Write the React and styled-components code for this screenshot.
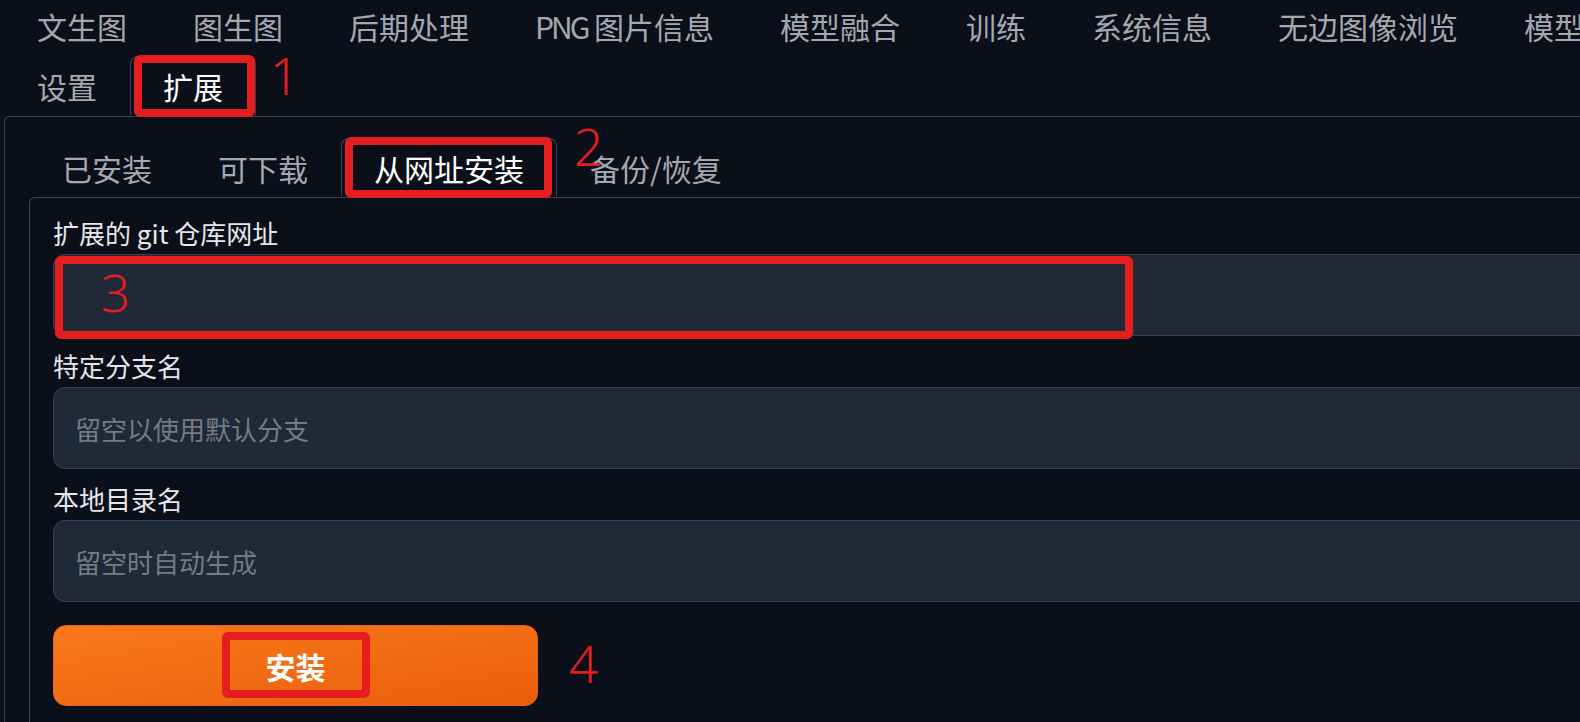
import React from 'react';
import styled, { createGlobalStyle } from 'styled-components';

const bg = '#0b0f19';
const line = '#374151';
const red = '#e41e1f';

const Global = createGlobalStyle`
  html, body {
    margin: 0;
    background: ${bg};
    overflow: hidden;
  }
  body {
    font-family: "Noto Sans CJK SC", "Noto Sans", sans-serif;
  }
`;

const Page = styled.div`
  width: 1700px;
  padding-left: 4px;
  box-sizing: border-box;
`;

const TabBar = styled.div`
  display: flex;
  flex-wrap: wrap;
  margin-top: ${p => p.$top || 0}px;
`;

const Tab = styled.div`
  position: relative;
  height: ${p => p.$h || 60}px;
  box-sizing: border-box;
  padding: 0 32px;
  display: flex;
  align-items: center;
  font-size: 30px;
  white-space: nowrap;
  color: ${p => (p.$active ? '#ffffff' : '#a4a8b0')};
  border: 1px solid ${p => (p.$active ? line : 'transparent')};
  border-bottom-color: ${p => (p.$active ? bg : 'transparent')};
  border-radius: 8px 8px 0 0;
  background: ${p => (p.$active ? bg : 'transparent')};
  margin-bottom: ${p => (p.$active ? '-1px' : '0')};
  z-index: ${p => (p.$active ? 1 : 0)};
`;

// latin in the reference font runs narrower than Noto's
const Latin = styled.span`
  letter-spacing: -3px;
`;

const Panel = styled.div`
  border-top: 1px solid ${line};
  border-left: 1px solid ${line};
  border-top-left-radius: 6px;
  padding: ${p => p.$pad};
`;

const Field = styled.div`
  display: flex;
  flex-direction: column;
  margin-bottom: 14px;
`;

const Label = styled.label`
  font-size: 26px;
  line-height: 32px;
  color: #e5e7eb;
  margin-bottom: 5px;
`;

const InputWrap = styled.div`
  position: relative;
`;

const Input = styled.input`
  display: block;
  width: 100%;
  height: 82px;
  box-sizing: border-box;
  background: #1f2937;
  border: 1px solid ${line};
  border-radius: 12px;
  padding: 0 21px;
  font-family: inherit;
  font-size: 26px;
  color: #e5e7eb;
  outline: none;
  &::placeholder {
    color: #747b86;
  }
`;

const Button = styled.button`
  position: relative;
  display: block;
  margin-top: 23px;
  width: 485px;
  height: 81px;
  border: 1px solid #e8660f;
  border-radius: 13px;
  background: linear-gradient(to bottom right, #f97a1c, #ea5e0c);
  color: #ffffff;
  font-family: inherit;
  font-size: 30px;
  font-weight: 700;
`;

const Mark = styled.div`
  position: absolute;
  left: ${p => p.$l}px;
  top: ${p => p.$t}px;
  width: ${p => p.$w}px;
  height: ${p => p.$h}px;
  box-sizing: border-box;
  border: 8px solid ${red};
  border-radius: 6px;
  pointer-events: none;
`;

const Num = styled.span`
  position: absolute;
  left: ${p => p.$l}px;
  top: ${p => p.$t}px;
  font-family: "Noto Sans", sans-serif;
  font-weight: 300;
  font-size: 52px;
  line-height: 1;
  color: ${red};
  z-index: 2;
`;

const mainTabs = ['文生图', '图生图', '后期处理', 'PNG', '模型融合', '训练', '系统信息', '无边图像浏览', '模型转换', '设置'];

export default function App() {
  return (
    <Page>
      <Global />
      <TabBar $top={-4}>
        {mainTabs.map(t =>
          t === 'PNG'
            ? <Tab key={t}><Latin>PNG</Latin>&nbsp;图片信息</Tab>
            : <Tab key={t}>{t}</Tab>
        )}
        <Tab $active>
          扩展
          <Mark $l={3} $t={-2} $w={121} $h={62} />
          <Num $l={139} $t={-8}>1</Num>
        </Tab>
      </TabBar>
      <Panel $pad="21px 0 80px 24px">
        <TabBar>
          <Tab $h={59}>已安装</Tab>
          <Tab $h={59}>可下载</Tab>
          <Tab $h={59} $active>
            从网址安装
            <Mark $l={3} $t={-2} $w={207} $h={61} />
            <Num $l={232} $t={-19}>2</Num>
          </Tab>
          <Tab $h={59}>备份/恢复</Tab>
        </TabBar>
        <Panel $pad="19px 0 60px 23px">
          <Field>
            <Label>扩展的 git 仓库网址</Label>
            <InputWrap>
              <Input />
              <Mark $l={2} $t={2} $w={1078} $h={83} />
              <Num $l={48} $t={12}>3</Num>
            </InputWrap>
          </Field>
          <Field>
            <Label>特定分支名</Label>
            <Input placeholder="留空以使用默认分支" />
          </Field>
          <Field>
            <Label>本地目录名</Label>
            <Input placeholder="留空时自动生成" />
          </Field>
          <Button>
            安装
            <Mark $l={168} $t={6} $w={148} $h={66} />
            <Num $l={515} $t={11}>4</Num>
          </Button>
        </Panel>
      </Panel>
    </Page>
  );
}
